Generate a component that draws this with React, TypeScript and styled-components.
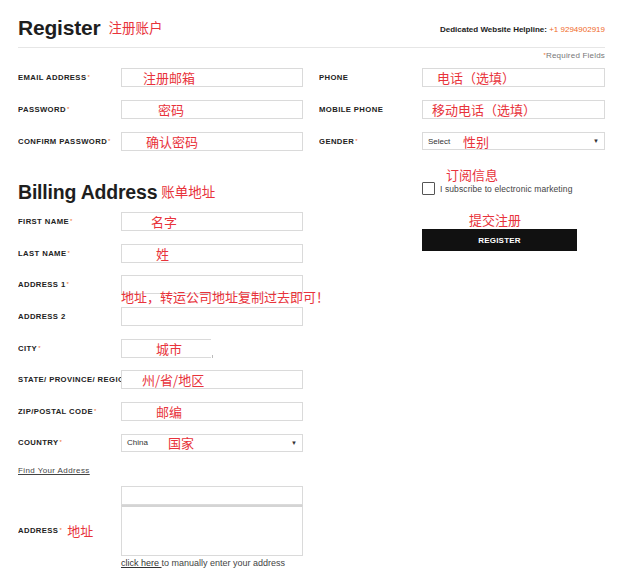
import React from "react";
import styled, { createGlobalStyle } from "styled-components";

const GlobalStyle = createGlobalStyle`
  body {
    margin: 0;
    background: #fff;
    font-family: "Liberation Sans", Arial, sans-serif;
    color: #222;
  }
`;

const RED = "#e8333b";
const ORANGE = "#f06a28";

const Page = styled.div`
  width: 587px;
  padding: 13px 0 0 18px;
`;

const Header = styled.div`
  display: flex;
  justify-content: space-between;
  align-items: center;
  height: 30px;
  border-bottom: 1px solid #e6e6e6;
  padding-bottom: 4px;
`;

const TitleWrap = styled.div`
  display: flex;
  align-items: center;
  gap: 8px;
`;

const Title = styled.h1`
  margin: 0;
  font-size: 21px;
  line-height: 26px;
  font-weight: 700;
  color: #1e1e1e;
  letter-spacing: -0.2px;
`;

const Note = styled.span<{ $size?: number }>`
  font-family: "Noto Sans CJK SC", sans-serif;
  font-size: ${(p) => p.$size ?? 13}px;
  font-weight: 400;
  line-height: 1;
  color: ${RED};
  white-space: nowrap;
  letter-spacing: 0;
`;

const Helpline = styled.div`
  font-size: 8px;
  font-weight: 700;
  color: #222;
  margin-top: 3px;

  span {
    color: ${ORANGE};
    font-weight: 400;
  }
`;

const Required = styled.div`
  text-align: right;
  font-size: 8px;
  color: #777;
  margin-top: 3px;
  letter-spacing: 0.2px;
`;

const Star = styled.sup`
  color: ${ORANGE};
  font-size: 6px;
  font-weight: 400;
  vertical-align: 1px;
  margin-left: 1px;
`;

const Columns = styled.div`
  display: grid;
  grid-template-columns: 285px 286px;
  column-gap: 16px;
  margin-top: 8px;
`;

const Stack = styled.div<{ $gap: number }>`
  display: flex;
  flex-direction: column;
  gap: ${(p) => p.$gap}px;
`;

const Row = styled.div`
  display: flex;
  align-items: center;
`;

const Label = styled.label`
  width: 103px;
  flex: none;
  overflow: hidden;
  white-space: nowrap;
  font-size: 7.7px;
  line-height: 16px;
  font-weight: 700;
  letter-spacing: 0.4px;
  color: #222;
`;

const LabelNote = styled(Note)`
  margin-left: 5px;
  vertical-align: -3px;
`;

const Field = styled.div<{ $indent?: number; $width?: number; $open?: boolean }>`
  position: relative;
  box-sizing: border-box;
  width: ${(p) => p.$width ?? 182}px;
  height: 19px;
  border: 1px solid #dadada;
  ${(p) => p.$open && "border-right: none;"}
  display: flex;
  align-items: center;
  padding-left: ${(p) => p.$indent ?? 0}px;
  background: #fff;
`;

const Tick = styled.i`
  position: absolute;
  right: -2px;
  bottom: -1px;
  width: 1px;
  height: 3px;
  background: #bbb;
`;

const Select = styled(Field)`
  height: 18px;
  padding-left: 5px;
`;

const SelectText = styled.span<{ $w: number }>`
  width: ${(p) => p.$w}px;
  font-size: 8px;
  color: #333;
`;

const Caret = styled.span`
  margin-left: auto;
  margin-right: 5px;
  font-size: 6px;
  color: #333;
`;

const Overlay = styled(Note)`
  position: absolute;
  left: -1px;
  top: 14px;
`;

const SectionTitle = styled.h2`
  margin: 29px 0 8px;
  display: flex;
  align-items: center;
  gap: 4px;
  font-size: 19.5px;
  line-height: 24px;
  font-weight: 700;
  color: #1e1e1e;
  letter-spacing: -0.2px;
`;

const FindLink = styled.a`
  display: block;
  margin-top: 14px;
  font-size: 8px;
  color: #444;
  text-decoration: underline;
  letter-spacing: 0.4px;
`;

const AddressGrid = styled.div`
  display: grid;
  grid-template-columns: 103px 182px;
  margin-top: 11px;
  align-items: center;
`;

const TextArea = styled.div`
  box-sizing: border-box;
  width: 182px;
  height: 51px;
  border: 1px solid #dadada;
  border-top: 2px solid #d4d4d4;
`;

const Hint = styled.div`
  margin-top: 2px;
  font-size: 9px;
  color: #444;
  white-space: nowrap;

  a {
    color: #333;
    text-decoration: underline;
  }
`;

const Side = styled.div`
  display: flex;
  flex-direction: column;
  padding-left: 103px;
`;

const SideNote = styled(Note)<{ $indent: number; $top: number }>`
  display: block;
  padding-left: ${(p) => p.$indent}px;
  margin-top: ${(p) => p.$top}px;
`;

const Check = styled.label`
  display: flex;
  align-items: center;
  gap: 5px;
  margin-top: 1px;
  font-size: 8.5px;
  color: #444;
  letter-spacing: 0.1px;
`;

const Box = styled.span`
  box-sizing: border-box;
  width: 13px;
  height: 13px;
  border: 1.5px solid #555;
  border-radius: 1px;
`;

const Button = styled.button`
  width: 155px;
  height: 22px;
  margin-top: 3px;
  border: none;
  background: #111;
  color: #fff;
  font-family: "Liberation Sans", Arial, sans-serif;
  font-size: 8px;
  font-weight: 700;
  letter-spacing: 0.2px;
  padding: 0;
`;

const Req = () => <Star>*</Star>;

export default function App() {
  return (
    <Page>
      <GlobalStyle />
      <Header>
        <TitleWrap>
          <Title>Register</Title>
          <Note $size={13.5}>注册账户</Note>
        </TitleWrap>
        <Helpline>
          Dedicated Website Helpline: <span>+1 9294902919</span>
        </Helpline>
      </Header>
      <Required>
        <Star>*</Star>Required Fields
      </Required>

      <Columns>
        <div>
          <Stack $gap={13}>
            <Row>
              <Label>EMAIL ADDRESS<Req /></Label>
              <Field $indent={21}><Note>注册邮箱</Note></Field>
            </Row>
            <Row>
              <Label>PASSWORD<Req /></Label>
              <Field $indent={36}><Note>密码</Note></Field>
            </Row>
            <Row>
              <Label>CONFIRM PASSWORD<Req /></Label>
              <Field $indent={24}><Note>确认密码</Note></Field>
            </Row>
          </Stack>

          <SectionTitle>
            Billing Address <Note $size={13.5}>账单地址</Note>
          </SectionTitle>

          <Stack $gap={12.7}>
            <Row>
              <Label>FIRST NAME<Req /></Label>
              <Field $indent={29}><Note>名字</Note></Field>
            </Row>
            <Row>
              <Label>LAST NAME<Req /></Label>
              <Field $indent={34}><Note>姓</Note></Field>
            </Row>
            <Row>
              <Label>ADDRESS 1<Req /></Label>
              <Field>
                <Overlay>地址，转运公司地址复制过去即可！</Overlay>
              </Field>
            </Row>
            <Row>
              <Label>ADDRESS 2</Label>
              <Field />
            </Row>
            <Row>
              <Label>CITY<Req /></Label>
              <Field $indent={34} $width={90} $open>
                <Note>城市</Note>
                <Tick />
              </Field>
            </Row>
            <Row>
              <Label>STATE/ PROVINCE/ REGION<Req /></Label>
              <Field $indent={20}><Note>州/省/地区</Note></Field>
            </Row>
            <Row>
              <Label>ZIP/POSTAL CODE<Req /></Label>
              <Field $indent={34}><Note>邮编</Note></Field>
            </Row>
            <Row>
              <Label>COUNTRY<Req /></Label>
              <Select>
                <SelectText $w={41}>China</SelectText>
                <Note>国家</Note>
                <Caret>▼</Caret>
              </Select>
            </Row>
          </Stack>

          <FindLink>Find Your Address</FindLink>

          <AddressGrid>
            <span />
            <Field />
            <Label>
              ADDRESS<Req />
              <LabelNote>地址</LabelNote>
            </Label>
            <TextArea />
            <span />
            <Hint>
              <a>click here </a>to manually enter your address
            </Hint>
          </AddressGrid>
        </div>

        <div>
          <Stack $gap={13}>
            <Row>
              <Label>PHONE</Label>
              <Field $indent={14} $width={183}><Note>电话（选填）</Note></Field>
            </Row>
            <Row>
              <Label>MOBILE PHONE</Label>
              <Field $indent={9} $width={183}><Note>移动电话（选填）</Note></Field>
            </Row>
            <Row>
              <Label>GENDER<Req /></Label>
              <Select $width={183}>
                <SelectText $w={35}>Select</SelectText>
                <Note>性别</Note>
                <Caret>▼</Caret>
              </Select>
            </Row>
          </Stack>

          <Side>
            <SideNote $indent={24} $top={18}>订阅信息</SideNote>
            <Check>
              <Box />I subscribe to electronic marketing
            </Check>
            <SideNote $indent={47} $top={18}>提交注册</SideNote>
            <Button>REGISTER</Button>
          </Side>
        </div>
      </Columns>
    </Page>
  );
}
